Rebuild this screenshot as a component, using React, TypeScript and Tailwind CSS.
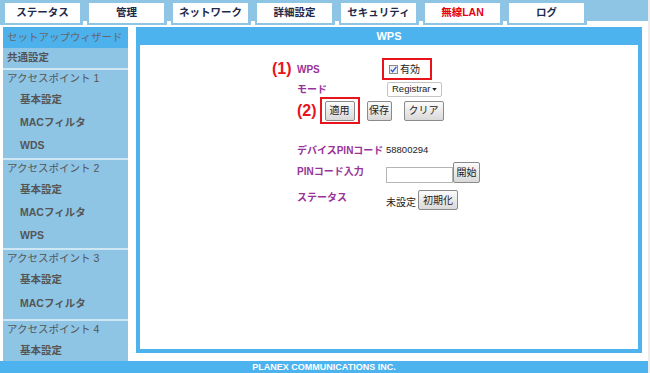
import React from "react";

const tabs = [
  { label: "ステータス" },
  { label: "管理" },
  { label: "ネットワーク" },
  { label: "詳細設定" },
  { label: "セキュリティ" },
  { label: "無線LAN", active: true },
  { label: "ログ" },
];

type Section = { title: string; items: string[]; sub: string; extra?: string };

const sections: Section[] = [
  { title: "アクセスポイント 1", items: ["基本設定", "MACフィルタ", "WDS"], sub: "h-[23px]", extra: "pb-px" },
  { title: "アクセスポイント 2", items: ["基本設定", "MACフィルタ", "WPS"], sub: "h-[23px]", extra: "pb-px" },
  { title: "アクセスポイント 3", items: ["基本設定", "MACフィルタ"], sub: "h-[24px]", extra: "pb-[3px]" },
  { title: "アクセスポイント 4", items: ["基本設定"], sub: "h-[23px]" },
];

function Btn({ children, className }: { children: React.ReactNode; className: string }) {
  return (
    <div
      className={`flex h-[20px] items-center justify-center rounded-[2px] border border-[#8a8a8a] bg-gradient-to-b from-[#fbfbfb] to-[#d9d9d9] text-[10px] text-[#222] ${className}`}
    >
      {children}
    </div>
  );
}

function Sidebar() {
  return (
    <div className="ml-[3px] flex h-[334px] w-[125px] flex-col overflow-hidden bg-[#8ec5e5] text-[10.5px] text-[#555]">
      <div className="flex h-[21px] shrink-0 items-center bg-[#4db2ec] pl-[4px] text-[#666]">
        セットアップウィザード
      </div>
      <div className="flex h-[20px] shrink-0 items-center pl-[4px] font-bold">共通設定</div>
      {sections.map((s) => (
        <div key={s.title} className={`shrink-0 ${s.extra ?? ""}`}>
          <div className="h-[2px] bg-[#cfe7f5]" />
          <div className="flex h-[18px] items-center pl-[4px]">{s.title}</div>
          {s.items.map((it) => (
            <div key={it} className={`flex ${s.sub} items-center pl-[17px] font-bold`}>
              {it}
            </div>
          ))}
        </div>
      ))}
    </div>
  );
}

function Marker({ children }: { children: React.ReactNode }) {
  return <span className="text-[16px] font-bold leading-none text-[#e8131b]">{children}</span>;
}

function Content() {
  return (
    <div className="flex flex-col pl-[132px] text-[10px] text-[#222]">
      {/* (1) WPS */}
      <div className="mt-[13px] flex h-[22px] items-center">
        <div className="w-[25px]">
          <Marker>(1)</Marker>
        </div>
        <div className="w-[85px] font-bold text-[#993399]">WPS</div>
        <div className="flex h-[22px] w-[50px] items-center border-2 border-[#e8131b] pl-[5px]">
          <span className="relative flex h-[9px] w-[9px] items-center justify-center border border-[#8a8a8a] bg-[#eeeeee]">
            <svg viewBox="0 0 10 10" className="absolute h-[9px] w-[9px]">
              <path d="M2 5.2 L4 7.4 L8.2 2" fill="none" stroke="#2255cc" strokeWidth="1.4" />
            </svg>
          </span>
          <span className="ml-[2px]">有効</span>
        </div>
      </div>
      {/* mode */}
      <div className="mt-[2px] flex h-[14px] items-center">
        <div className="w-[25px]" />
        <div className="w-[85px] font-bold text-[#993399]">モード</div>
        <div className="ml-[5px] flex h-[15px] w-[55px] items-center justify-between rounded-[2px] border border-[#c4c4c4] bg-white pl-[4px] pr-[4px] text-[9.5px]">
          <span>Registrar</span>
          <svg viewBox="0 0 6 4" className="h-[3px] w-[5px]">
            <path d="M0 0 L6 0 L3 4 Z" fill="#222" />
          </svg>
        </div>
      </div>
      {/* (2) buttons */}
      <div className="mt-px flex h-[27px] items-center pl-[25px]">
        <Marker>(2)</Marker>
        <div className="ml-[3px] flex h-[27px] w-[40px] items-center justify-center border-2 border-[#e8131b]">
          <Btn className="w-[30px]">適用</Btn>
        </div>
        <Btn className="ml-[7px] w-[25px]">保存</Btn>
        <Btn className="ml-[12px] w-[40px]">クリア</Btn>
      </div>
      {/* device pin */}
      <div className="mt-[18px] flex h-[16px] items-center pl-[25px]">
        <div className="w-[89px] font-bold text-[#993399]">デバイスPINコード</div>
        <div className="text-[9.5px]">58800294</div>
      </div>
      {/* pin input */}
      <div className="mt-[4px] flex h-[21px] items-end pl-[25px]">
        <div className="mb-[4px] w-[89px] font-bold leading-[14px] text-[#993399]">PINコード入力</div>
        <div className="h-[16px] w-[67px] border border-[#b5b5b5] bg-white" />
        <Btn className="h-[21px] w-[27px]">開始</Btn>
      </div>
      {/* status */}
      <div className="mt-[7px] flex h-[20px] pl-[25px]">
        <div className="mt-px w-[89px] self-start font-bold leading-[14px] text-[#993399]">ステータス</div>
        <div className="self-end leading-[14px]">未設定</div>
        <Btn className="ml-[2px] w-[40px]">初期化</Btn>
      </div>
    </div>
  );
}

export default function App() {
  return (
    <div className="flex h-[373px] w-[650px] overflow-hidden bg-[#ececec] font-['Liberation_Sans','Noto_Sans_CJK_JP',sans-serif]">
      <div className="flex w-[648px] flex-col bg-white">
        {/* tab bar */}
        <div className="flex h-[25px] items-start">
          <div className="flex h-[25px] w-[587px] bg-[#8ec5e5] pl-[5px]">
            {tabs.map((t, i) => (
              <div key={t.label} className="flex h-[25px] pt-[3px]">
                <div
                  className={`flex h-[20px] w-[75px] items-center justify-center bg-white text-[10.5px] font-bold ${
                    t.active ? "text-[#e60012]" : "text-[#1e2a4a]"
                  }`}
                >
                  {t.label}
                </div>
                {i < tabs.length - 1 && (
                  <div className="flex w-[9px] flex-col justify-end">
                    <div className="mx-auto h-[4px] w-[4px] bg-white" />
                  </div>
                )}
              </div>
            ))}
          </div>
          <div className="h-[21px] flex-1 bg-[#8ec5e5]" />
        </div>
        <div className="h-[2px]" />
        {/* main */}
        <div className="flex h-[334px]">
          <Sidebar />
          <div className="ml-[8px] flex h-[326px] w-[506px] flex-col">
            <div className="flex h-[18px] items-center justify-center bg-[#4db3ee] text-[11px] font-bold text-white">
              WPS
            </div>
            <div className="flex-1 border-x-4 border-b-4 border-[#4db3ee] bg-white">
              <Content />
            </div>
          </div>
        </div>
        {/* footer */}
        <div className="flex h-[12px] items-center justify-center bg-[#4db3ee] text-[9px] font-bold leading-none text-white">
          PLANEX COMMUNICATIONS INC.
        </div>
      </div>
    </div>
  );
}
